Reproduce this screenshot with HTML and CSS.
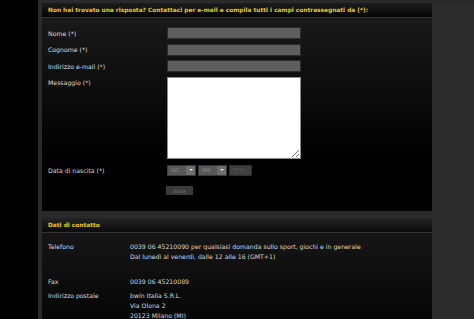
FILE: index.html
```html
<!DOCTYPE html>
<html lang="it">
<head>
<meta charset="utf-8">
<title>Contatti</title>
<link rel="stylesheet" href="styles.css">
</head>
<body>
<div class="page">
  <div class="gutter"></div>
  <div class="frame">
    <div class="main">
      <section class="panel panel-form">
        <h2 class="panel-head">Non hai trovato una risposta? Contattaci per e-mail e compila tutti i campi contrassegnati da (*):</h2>
        <div class="panel-body form-body">
          <form class="form">
            <label class="lbl">Nome (*)</label>
            <input class="field" type="text">
            <label class="lbl">Cognome (*)</label>
            <input class="field" type="text">
            <label class="lbl">Indirizzo e-mail (*)</label>
            <input class="field" type="text">
            <label class="lbl lbl-top">Messaggio (*)</label>
            <textarea class="area"></textarea>
            <label class="lbl">Data di nascita (*)</label>
            <div class="date">
              <div class="sel sel-gg"><span class="sel-text">GG</span><span class="sel-btn"><span class="tri"></span></span></div>
              <div class="sel sel-mm"><span class="sel-text">MM</span><span class="sel-btn"><span class="tri"></span></span></div>
              <div class="year">YYYY</div>
            </div>
            <span class="lbl"></span>
            <div class="actions"><span class="btn">Invia</span></div>
          </form>
        </div>
      </section>
      <section class="panel panel-contact">
        <h2 class="panel-head">Dati di contatto</h2>
        <div class="panel-body contact-body">
          <dl class="contacts">
            <dt>Telefono</dt>
            <dd>0039 06 45210090 per qualsiasi domanda sullo sport, giochi e in generale<br>Dal lunedì al venerdì, dalle 12 alle 16 (GMT+1)<br>&nbsp;</dd>
            <dt>Fax</dt>
            <dd>0039 06 45210089</dd>
            <dt>Indirizzo postale</dt>
            <dd>bwin Italia S.R.L.<br>Via Olona 2<br>20123 Milano (MI)</dd>
          </dl>
        </div>
      </section>
    </div>
    <div class="side"></div>
  </div>
</div>
</body>
</html>
```

FILE: styles.css
```css
* { box-sizing: border-box; }
html, body { margin: 0; padding: 0; }
body {
  background: #000;
  width: 474px;
  height: 319px;
  overflow: hidden;
  font-family: "DejaVu Sans", Verdana, sans-serif;
  font-size: 6.2px;
  color: #dcdcdc;
}
.page {
  display: flex;
  height: 319px;
}
.gutter {
  width: 38px;
  flex: none;
  background: #000;
}
.frame {
  flex: 1;
  display: flex;
  background: #2a2a2a;
  padding: 3px 0 0 4px;
}
.main {
  width: 390px;
  flex: none;
  display: flex;
  flex-direction: column;
  gap: 7px;
}
.side {
  flex: 1;
  background: #2b2b2b;
}
.panel {
  display: flex;
  flex-direction: column;
}
.panel-head {
  margin: 0;
  height: 15px;
  padding: 0 6px;
  display: flex;
  align-items: center;
  font-size: 5.85px;
  font-weight: bold;
  color: #ecc81c;
  background: linear-gradient(#242424, #0a0a0a);
  border-bottom: 1px solid #333;
}
.panel-form .panel-head {
  background: linear-gradient(#1c1c1c, #050505);
}
.panel-body {
  background: linear-gradient(#191919, #000 75%);
}
.form-body {
  padding: 9px 6px 16px 6px;
}
.form {
  display: grid;
  grid-template-columns: 119px 134px;
  row-gap: 4.5px;
  align-items: center;
}
.lbl {
  color: #dcdcdc;
}
.lbl-top {
  align-self: start;
  padding-top: 2px;
}
.field {
  display: block;
  width: 134px;
  height: 12px;
  margin: 0;
  padding: 0;
  background: #5e5e5e;
  border: 1px solid #2c2c2c;
  border-radius: 0;
  outline: none;
}
.area {
  display: block;
  width: 134px;
  height: 82px;
  margin: 0;
  padding: 0;
  background: #fff;
  border: 1px solid #8c8c8c;
  border-radius: 0;
  outline: none;
}
.area + .lbl, .area + .lbl + .date { margin-top: 1.5px; }
.date {
  display: flex;
  gap: 2px;
  height: 11px;
}
.sel {
  display: flex;
  height: 11px;
  background: #575757;
  border: 1px solid #3a3a3a;
}
.sel-gg { width: 29px; }
.sel-mm { width: 29px; }
.sel-text {
  flex: 1;
  padding-left: 3px;
  display: flex;
  align-items: center;
  color: #8a8a8a;
  font-size: 5px;
}
.sel-btn {
  width: 9px;
  background: #6e6e6e;
  display: flex;
  align-items: center;
  justify-content: center;
}
.tri {
  width: 0;
  height: 0;
  border-left: 2px solid transparent;
  border-right: 2px solid transparent;
  border-top: 2px solid #e0e0e0;
}
.year {
  width: 23px;
  height: 11px;
  background: #3f3f3f;
  border: 1px solid #2e2e2e;
  color: #5e5e5e;
  font-size: 5px;
  display: flex;
  align-items: center;
  padding-left: 3px;
}
.actions {
  margin-top: 6px;
  margin-left: -1px;
}
.btn {
  display: inline-flex;
  align-items: center;
  justify-content: center;
  width: 27px;
  height: 9px;
  background: #3b3b3b;
  color: #7a7a7a;
  font-size: 5px;
}
.panel-contact {
  flex: 1;
}
.contact-body {
  flex: 1;
  padding: 9px 6px 0 6px;
  background: linear-gradient(#161616, #050505);
}
.contacts {
  margin: 0;
  display: grid;
  grid-template-columns: 82px 1fr;
  row-gap: 4.5px;
  line-height: 10px;
}
.contacts dt, .contacts dd {
  margin: 0;
  color: #d8d8d8;
}
```
